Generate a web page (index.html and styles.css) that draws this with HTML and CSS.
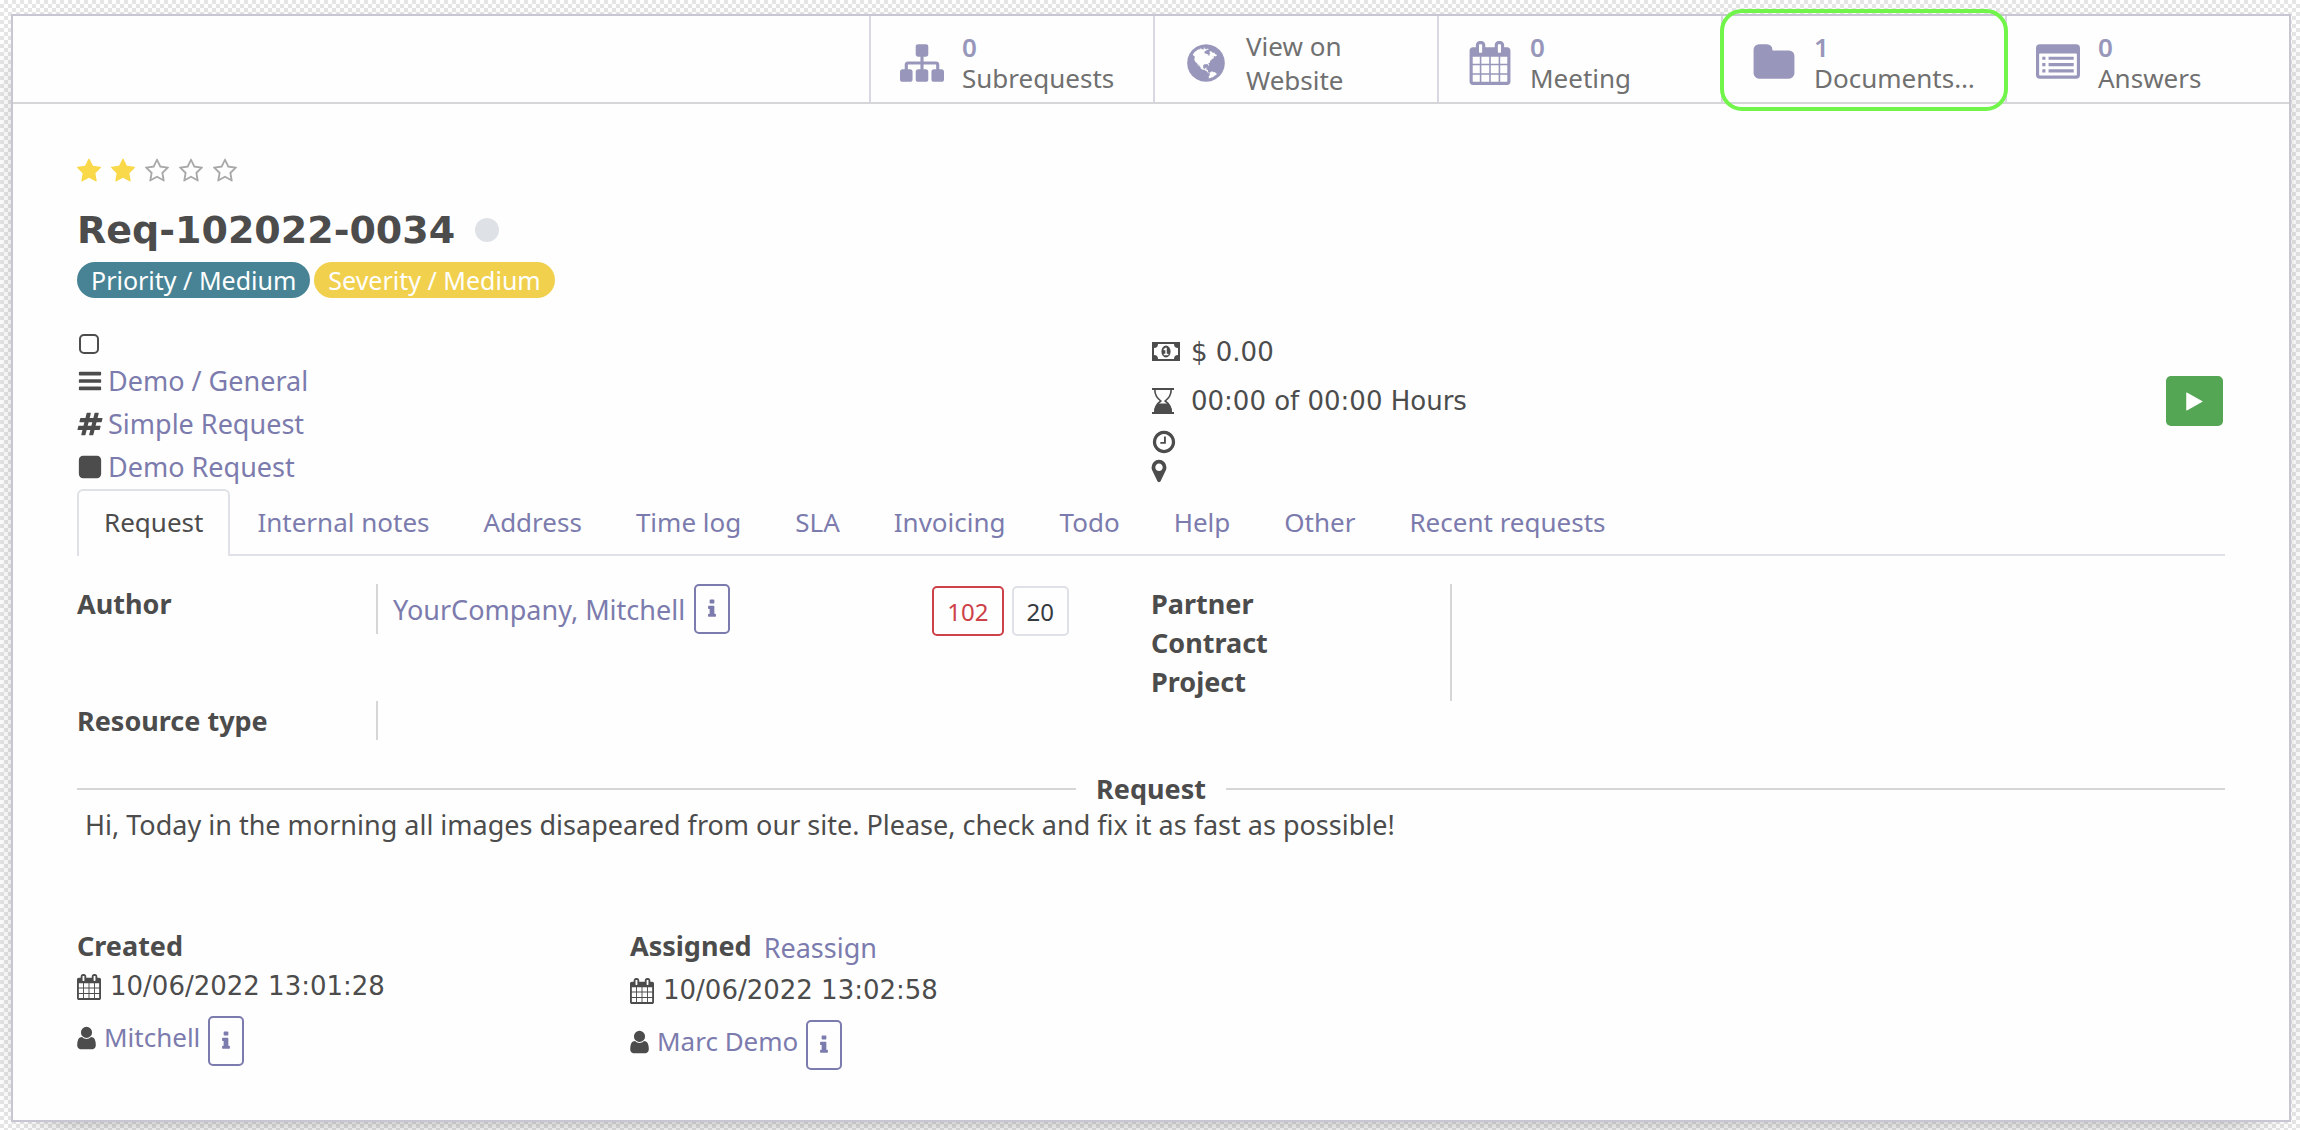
FILE: index.html
```html
<!DOCTYPE html>
<html lang="en">
<head>
  <meta charset="UTF-8" />
  <title>Req-102022-0034</title>
  <link rel="stylesheet" href="styles.css">
</head>
<body>

<!-- icon set -->
<svg class="sprite" aria-hidden="true">
  <symbol id="i-sitemap" viewBox="0 0 1792 1792"><path d="M1792 1248v320q0 40-28 68t-68 28h-320q-40 0-68-28t-28-68v-320q0-40 28-68t68-28h96v-192h-512v192h96q40 0 68 28t28 68v320q0 40-28 68t-68 28h-320q-40 0-68-28t-28-68v-320q0-40 28-68t68-28h96v-192h-512v192h96q40 0 68 28t28 68v320q0 40-28 68t-68 28h-320q-40 0-68-28t-28-68v-320q0-40 28-68t68-28h96v-192q0-52 38-90t90-38h512v-192h-96q-40 0-68-28t-28-68v-320q0-40 28-68t68-28h320q40 0 68 28t28 68v320q0 40-28 68t-68 28h-96v192h512q52 0 90 38t38 90v192h96q40 0 68 28t28 68z"/></symbol>
  <symbol id="i-globe" viewBox="0 0 1792 1792"><path d="M896 128q209 0 385.5 103t279.5 279.5 103 385.5-103 385.5-279.5 279.5-385.5 103-385.5-103-279.5-279.5-103-385.5 103-385.5 279.5-279.5 385.5-103zm274 521q-2 1-9.5 9.5t-13.5 9.5q2 0 4.5-5t5-11 3.5-7q6-7 22-15 14-6 52-12 34-8 51 11-2-2 9.5-13t14.5-12q3-2 15-4.5t15-7.5l2-22q-12 1-17.5-7t-6.5-21q0 2-6 8 0-7-4.5-8t-11.5 1-9 1q-10-3-15-7.5t-8-16.5-4-15q-2-5-9.5-10.5t-9.5-10.5q-1-2-2.5-5.5t-3-6.5-4-5.5-5.5-2.5-7 5-7.5 10-4.5 5q-3-2-6-1.5t-4.5 1-4.5 3-5 3.5q-3 2-8.5 3t-8.5 2q15-5-1-11-10-4-16-3 9-4 7.5-12t-8.5-14h5q-1-4-8.5-8.5t-17.5-8.5-13-6q-8-5-34-9.5t-33-.5q-5 6-4.5 10.5t4 14 3.5 12.5q1 6-5.5 13t-6.5 12q0 7 14 15.5t10 21.5q-3 8-16 16t-16 12q-5 8-1.5 18.5t10.5 16.5q2 2 1.5 4t-3.5 4.5-5.5 4-6.5 3.5l-3 2q-11 5-20.5-6t-13.5-26q-7-25-16-30-23-8-29 1-5-13-41-26-25-9-58-4 6-1 0-15-7-15-19-12 3-6 4-17.5t1-13.5q3-13 12-23 1-1 7-8.5t9.5-13.5.5-6q35 4 50-11 5-5 11.5-17t10.5-17q9-6 14-5.5t14.5 5.5 14.5 5q14 1 15.5-11t-7.5-20q12 1 3-17-4-7-8-9-12-4-27 5-8 4 2 8-1-1-9.5 10.5t-16.5 17.5-16-5q-1-1-5.5-13.5t-9.5-13.5q-8 0-16 15 3-8-11-15t-24-8q19-12-8-27-7-4-20.5-5t-19.5 4q-5 7-5.5 11.5t5 8 10.5 5.5 11.5 4 8.5 3q14 10 8 14-2 1-8.5 3.5t-11.5 4.5-6 4q-3 4 0 14t-2 14q-5-5-9-17.5t-7-16.5q7 9-25 6l-10-1q-4 0-16 2t-20.5 1-13.5-8q-4-8 0-20 1-4 4-2-4-3-11-9.5t-10-8.5q-46 15-94 41 6 1 12-1 5-2 13-6.5t10-5.5q34-14 42-7l5-5q14 16 20 25-7-4-30-1-20 6-22 12 7 12 5 18-4-3-11.5-10t-14.5-11-15-5q-16 0-22 1-146 80-235 222 7 7 12 8 4 1 5 9t2.5 11 11.5-3q9 8 3 19 1-1 44 27 19 17 21 21 3 11-10 18-1-2-9-9t-9-4q-3 5 .5 18.5t10.5 12.5q-7 0-9.5 16t-2.5 35.5-1 23.5l2 1q-3 12 5.5 34.5t21.5 19.5q-13 3 20 43 6 8 8 9 3 2 12 7.5t15 10 10 10.5q4 5 10 22.5t14 23.5q-2 6 9.5 20t10.5 23q-1 0-2.5 1t-2.5 1q3 7 15.5 14t15.5 13q1 3 2 10t3 11 8 2q2-20-24-62-15-25-17-29-3-5-5.5-15.5t-4.5-14.5q2 0 6 1.5t8.5 3.5 7.5 4 2 3q-3 7 2 17.5t12 18.5 17 19 12 13q6 6 14 19.5t0 13.5q9 0 20 10.5t17 19.5q5 8 8 26t5 24q2 7 8.5 13.5t12.5 9.5l16 8 13 7q5 2 18.5 10.5t21.5 11.5q10 4 16 4t14.5-2.5 13.5-3.5q15-2 29 15t21 21q36 19 55 11-2 1 .5 7.5t8 15.5 9 14.5 5.5 8.5q5 6 18 15t18 15q6-4 7-9-3 8 7 20t18 10q14-3 14-32-31 15-49-18 0-1-2.5-5.5t-4-8.5-2.5-8.5 0-7.5 5-3q9 0 10-3.5t-2-12.5-4-13q-1-8-11-20t-12-15q-5 9-16 8t-16-9q0 1-1.5 5.5t-1.5 6.5q-13 0-15-1 1-3 2.5-17.5t3.5-22.5q1-4 5.5-12t7.5-14.5 4-12.5-4.5-9.5-17.5-2.5q-19 1-26 20-1 3-3 10.5t-5 11.5-9 7q-7 3-24 2t-24-5q-13-8-22.5-29t-9.5-37q0-10 2.5-26.5t3-25-5.5-24.5q3-2 9-9.5t10-10.5q2-1 4.5-1.5t4.5 0 4-1.5 3-6q-1-1-4-3-3-3-4-3 7 3 28.5-1.5t27.5 1.5q15 11 22-2 0-1-2.5-9.5t-.5-13.5q5 27 29 9 3 3 15.5 5t17.5 5q3 2 7 5.5t5.5 4.5 5-.5 8.5-6.5q10 14 12 24 11 40 19 44 7 3 11 2t4.5-9.5 0-14-1.5-12.5l-1-8v-18l-1-8q-15-3-18.5-12t1.5-18.5 15-18.5q1-1 8-3.5t15.5-6.5 12.5-8q21-19 15-35 7 0 11-9-1 0-5-3t-7.5-5-4.5-2q9-5 2-16 5-3 7.5-11t7.5-10q9 12 21 2 8-8 1-16 5-7 20.5-10.5t18.5-9.5q7 2 8-2t1-12 3-12q4-5 15-9t13-5l17-11q3-4 0-4 18 2 31-11 10-11-6-20 3-6-3-9.5t-15-5.5q3-1 11.5-.5t10.5-1.5q15-10-7-16-17-5-43 12zm-163 877q206-36 351-189-3-3-12.5-4.5t-12.5-3.5q-18-7-24-8 1-7-2.5-13t-8-9-12.5-8-11-7q-2-2-7-6t-7-5.5-7.5-4.5-8.5-2-10 1l-3 1q-3 1-5.5 2.5t-5.5 3-4 3 0 2.5q-21-17-36-22-5-1-11-5.5t-10.5-7-10-1.5-11.5 7q-5 5-6 15t-2 13q-7-5 0-17.5t2-18.5q-3-6-10.5-4.5t-12 4.5-11.5 8.5-9 6.5-8.5 5.5-8.5 7.5q-3 4-6 12t-5 11q-2-4-11.5-6.5t-9.5-5.5q2 10 4 35t5 38q7 31-12 48-27 25-29 40-4 22 12 26 0 7-8 20.5t-7 21.5q0 6 2 16z"/></symbol>
  <symbol id="i-calendar" viewBox="64 0 1664 1792"><path d="M192 1664h288v-288h-288v288zm352 0h320v-288h-320v288zm-352-352h288v-320h-288v320zm352 0h320v-320h-320v320zm-352-384h288v-288h-288v288zm736 736h320v-288h-320v288zm-384-736h320v-288h-320v288zm768 736h288v-288h-288v288zm-384-352h320v-320h-320v320zm-352-864v-288q0-13-9.5-22.5t-22.5-9.5h-64q-13 0-22.5 9.5t-9.5 22.5v288q0 13 9.5 22.5t22.5 9.5h64q13 0 22.5-9.5t9.5-22.5zm736 864h288v-320h-288v320zm-384-384h320v-288h-320v288zm384 0h288v-288h-288v288zm32-480v-288q0-13-9.5-22.5t-22.5-9.5h-64q-13 0-22.5 9.5t-9.5 22.5v288q0 13 9.5 22.5t22.5 9.5h64q13 0 22.5-9.5t9.5-22.5zm384-64v1280q0 52-38 90t-90 38h-1408q-52 0-90-38t-38-90v-1280q0-52 38-90t90-38h128v-96q0-66 47-113t113-47h64q66 0 113 47t47 113v96h384v-96q0-66 47-113t113-47h64q66 0 113 47t47 113v96h128q52 0 90 38t38 90z"/></symbol>
  <symbol id="i-folder" viewBox="0 0 1792 1792"><path d="M1728 608v704q0 92-66 158t-158 66h-1216q-92 0-158-66t-66-158v-960q0-92 66-158t158-66h320q92 0 158 66t66 158v32h672q92 0 158 66t66 158z"/></symbol>
  <symbol id="i-list" viewBox="0 0 1792 1792">
    <path fill-rule="evenodd" d="M160 128h1472q160 0 160 160v1088q0 160-160 160h-1472q-160 0-160-160v-1088q0-160 160-160zM160 512q-32 0-32 32v832q0 32 32 32h1472q32 0 32-32v-832q0-32-32-32z"/>
    <path d="M256 640h128v128h-128zM256 896h128v128h-128zM256 1152h128v128h-128zM512 640h1024v128h-1024zM512 896h1024v128h-1024zM512 1152h1024v128h-1024z"/>
  </symbol>
  <symbol id="i-star" viewBox="64 0 1664 1792"><path d="M1728 647q0 22-26 48l-363 354 86 500q1 7 1 20 0 21-10.5 35.5t-30.5 14.5q-19 0-40-12l-449-236-449 236q-22 12-40 12-21 0-31.5-14.5t-10.5-35.5q0-6 2-20l86-500-364-354q-25-27-25-48 0-37 56-46l502-73 225-455q19-41 49-41t49 41l225 455 502 73q56 9 56 46z"/></symbol>
  <symbol id="i-star-o" viewBox="64 0 1664 1792"><path d="M1201 1004l306-297-422-62-189-382-189 382-422 62 306 297-73 421 378-199 377 199zm527-357q0 22-26 48l-363 354 86 500q1 7 1 20 0 50-41 50-19 0-40-12l-449-236-449 236q-22 12-40 12-21 0-31.5-14.5t-10.5-35.5q0-6 2-20l86-500-364-354q-25-27-25-48 0-37 56-46l502-73 225-455q19-41 49-41t49 41l225 455 502 73q56 9 56 46z"/></symbol>
  <symbol id="i-bars" viewBox="0 0 1792 1792"><path d="M192 256h1408q64 0 64 64v128q0 64-64 64h-1408q-64 0-64-64v-128q0-64 64-64zM192 768h1408q64 0 64 64v128q0 64-64 64h-1408q-64 0-64-64v-128q0-64 64-64zM192 1280h1408q64 0 64 64v128q0 64-64 64h-1408q-64 0-64-64v-128q0-64 64-64z"/></symbol>
  <symbol id="i-hashtag" viewBox="0 0 1792 1792"><path d="M991 1024l64-256h-254l-64 256h254zm768-504l-56 224q-7 24-31 24h-327l-64 256h311q15 0 25 12 10 14 6 28l-56 224q-5 24-31 24h-327l-81 328q-7 24-31 24h-224q-16 0-26-12-9-12-6-28l78-312h-254l-81 328q-7 24-31 24h-225q-15 0-25-12-9-12-6-28l78-312h-311q-15 0-25-12-9-12-6-28l56-224q7-24 31-24h327l64-256h-311q-15 0-25-12-10-14-6-28l56-224q5-24 31-24h327l81-328q7-24 32-24h224q15 0 25 12 9 12 6 28l-78 312h254l81-328q7-24 32-24h224q15 0 25 12 9 12 6 28l-78 312h311q15 0 25 12 9 12 6 28z"/></symbol>
  <symbol id="i-square" viewBox="0 0 1792 1792"><rect x="128" y="128" width="1536" height="1536" rx="288"/></symbol>
  <symbol id="i-money" viewBox="0 0 30 26">
    <path fill-rule="evenodd" d="M1 3h28v19h-28zM3 9v7q4 0 4 4h16q0-4 4-4v-7q-4 0-4-4h-16q0 4-4 4z"/>
    <path fill-rule="evenodd" d="M15 6.500a4.600 6 0 0 1 0 12a4.600 6 0 0 1 0-12zM15.800 8.800h-1.500l-2 1.800 1 1 1-.8v4h-1.600v1.500h4.700v-1.500h-1.600z"/>
  </symbol>
  <symbol id="i-hourglass" viewBox="0 0 24 28">
    <path d="M1 1h22v2h-22zM1 25h22v2h-22zM3 25q0-6 5-8.500h8q5 2.500 5 8.500z"/>
    <path fill="none" stroke="currentColor" stroke-width="1.600" d="M3.800 2.500c0 6 2.500 8.500 6 11.500c-3.500 2.500-6 5-6 11.500M20.200 2.500c0 6-2.500 8.500-6 11.500c3.500 2.500 6 5 6 11.500"/>
  </symbol>
  <symbol id="i-clock" viewBox="0 0 1792 1792"><path d="M1024 544v448q0 14-9 23t-23 9h-320q-14 0-23-9t-9-23v-64q0-14 9-23t23-9h224v-352q0-14 9-23t23-9h64q14 0 23 9t9 23zm416 352q0-148-73-273t-198-198-273-73-273 73-198 198-73 273 73 273 198 198 273 73 273-73 198-198 73-273zm224 0q0 209-103 385.500t-279.500 279.500-385.500 103-385.500-103-279.500-279.500-103-385.500 103-385.500 279.500-279.500 385.500-103 385.500 103 279.500 279.500 103 385.500z"/></symbol>
  <symbol id="i-marker" viewBox="384 0 1024 1792"><path d="M1152 640q0-106-75-181t-181-75-181 75-75 181 75 181 181 75 181-75 75-181zm256 0q0 109-33 179l-364 774q-16 33-47.500 52t-67.500 19-67.500-19-46.500-52l-365-774q-33-70-33-179 0-212 150-362t362-150 362 150 150 362z"/></symbol>
  <symbol id="i-user" viewBox="256 0 1280 1792"><path d="M1536 1399q0 109-62.500 187t-150.500 78h-854q-88 0-150.500-78t-62.500-187q0-85 8.500-160.500t31.500-152 58.500-131 94-89 134.500-34.500q131 128 313 128t313-128q76 0 134.500 34.500t94 89 58.500 131 31.500 152 8.500 160.500zm-256-887q0 159-112.500 271.500t-271.500 112.500-271.500-112.500-112.500-271.500 112.500-271.500 271.500-112.500 271.500 112.500 112.500 271.500z"/></symbol>
  <symbol id="i-info" viewBox="0 0 1792 1792"><path d="M1216 1344v128q0 26-19 45t-45 19h-512q-26 0-45-19t-19-45v-128q0-26 19-45t45-19h64v-384h-64q-26 0-45-19t-19-45v-128q0-26 19-45t45-19h384q26 0 45 19t19 45v576h64q26 0 45 19t19 45zm-128-1152v192q0 26-19 45t-45 19h-256q-26 0-45-19t-19-45v-192q0-26 19-45t45-19h256q26 0 45 19t19 45z"/></symbol>
  <symbol id="i-play" viewBox="0 0 1792 1792"><path d="M1576 927l-1328 738q-23 13-39.500 3t-16.500-36v-1472q0-26 16.500-36t39.500 3l1328 738q23 13 23 31t-23 31z"/></symbol>
</svg>

<main class="sheet">
  <div class="button-box">
    <button class="stat">
      <svg class="stat-icon"><use href="#i-sitemap"/></svg>
      <span class="stat-info"><span class="stat-value">0</span><span class="stat-text">Subrequests</span></span>
    </button>
    <button class="stat">
      <svg class="stat-icon"><use href="#i-globe"/></svg>
      <span class="stat-info"><span class="stat-text">View on<br>Website</span></span>
    </button>
    <button class="stat">
      <svg class="stat-icon"><use href="#i-calendar"/></svg>
      <span class="stat-info"><span class="stat-value">0</span><span class="stat-text">Meeting</span></span>
    </button>
    <button class="stat highlighted">
      <svg class="stat-icon"><use href="#i-folder"/></svg>
      <span class="stat-info"><span class="stat-value">1</span><span class="stat-text">Documents…</span></span>
    </button>
    <button class="stat">
      <svg class="stat-icon"><use href="#i-list"/></svg>
      <span class="stat-info"><span class="stat-value">0</span><span class="stat-text">Answers</span></span>
    </button>
  </div>

  <div class="content">
    <div class="stars">
      <a href="#" class="on" aria-label="1 star"><svg class="icon icon-narrow"><use href="#i-star"/></svg></a>
      <a href="#" class="on" aria-label="2 stars"><svg class="icon icon-narrow"><use href="#i-star"/></svg></a>
      <a href="#" aria-label="3 stars"><svg class="icon icon-narrow"><use href="#i-star-o"/></svg></a>
      <a href="#" aria-label="4 stars"><svg class="icon icon-narrow"><use href="#i-star-o"/></svg></a>
      <a href="#" aria-label="5 stars"><svg class="icon icon-narrow"><use href="#i-star-o"/></svg></a>
    </div>

    <div class="title">
      <h1>Req-102022-0034</h1>
      <button class="state-dot" aria-label="Kanban state"></button>
    </div>

    <div class="tags">
      <span class="tag tag-priority">Priority / Medium</span>
      <span class="tag tag-severity">Severity / Medium</span>
    </div>

    <div class="meta">
      <div class="meta-left">
        <div class="meta-check"><input type="checkbox" aria-label="Channel"></div>
        <div class="meta-row"><svg class="icon"><use href="#i-bars"/></svg><a href="#">Demo / General</a></div>
        <div class="meta-row"><svg class="icon"><use href="#i-hashtag"/></svg><a href="#">Simple Request</a></div>
        <div class="meta-row"><svg class="icon"><use href="#i-square"/></svg><a href="#">Demo Request</a></div>
      </div>
      <div class="meta-right">
        <div class="info-row"><svg class="icon icon-wide"><use href="#i-money"/></svg><span class="numeric">$ 0.00</span></div>
        <div class="info-row">
          <svg class="icon icon-hourglass"><use href="#i-hourglass"/></svg><span class="numeric">00:00 of 00:00 Hours</span>
          <button class="play" aria-label="Start work"><svg class="play-icon"><use href="#i-play"/></svg></button>
        </div>
        <div class="icon-row"><svg class="icon"><use href="#i-clock"/></svg></div>
        <div class="icon-row"><svg class="icon icon-marker"><use href="#i-marker"/></svg></div>
      </div>
    </div>

    <nav class="tabs">
      <a href="#" class="active">Request</a>
      <a href="#">Internal notes</a>
      <a href="#">Address</a>
      <a href="#">Time log</a>
      <a href="#">SLA</a>
      <a href="#">Invoicing</a>
      <a href="#">Todo</a>
      <a href="#">Help</a>
      <a href="#">Other</a>
      <a href="#">Recent requests</a>
    </nav>

    <div class="groups">
      <div class="field">
        <div class="label">Author</div>
        <div class="value">
          <a href="#">YourCompany, Mitchell</a>
          <button class="btn-info" aria-label="Author info"><svg class="info-icon"><use href="#i-info"/></svg></button>
        </div>
        <div class="counters">
          <button class="counter danger">102</button>
          <button class="counter">20</button>
        </div>
      </div>
      <div class="field">
        <div class="label">Partner<br>Contract<br>Project</div>
        <div class="value"></div>
      </div>
      <div class="field">
        <div class="label">Resource type</div>
        <div class="value"></div>
      </div>
    </div>

    <h2 class="separator">Request</h2>
    <p class="message">Hi, Today in the morning all images disapeared from our site. Please, check and fix it as fast as possible!</p>

    <div class="history">
      <div>
        <div class="history-head"><strong>Created</strong></div>
        <div class="history-date"><svg class="icon icon-narrow"><use href="#i-calendar"/></svg><span class="numeric">10/06/2022 13:01:28</span></div>
        <div class="history-user">
          <svg class="icon icon-user"><use href="#i-user"/></svg><a href="#">Mitchell</a>
          <button class="btn-info" aria-label="Creator info"><svg class="info-icon"><use href="#i-info"/></svg></button>
        </div>
      </div>
      <div>
        <div class="history-head"><strong>Assigned</strong><a href="#">Reassign</a></div>
        <div class="history-date"><svg class="icon icon-narrow"><use href="#i-calendar"/></svg><span class="numeric">10/06/2022 13:02:58</span></div>
        <div class="history-user">
          <svg class="icon icon-user"><use href="#i-user"/></svg><a href="#">Marc Demo</a>
          <button class="btn-info" aria-label="Assignee info"><svg class="info-icon"><use href="#i-info"/></svg></button>
        </div>
      </div>
    </div>
  </div>
</main>

</body>
</html>
```
FILE: styles.css
```css
* { box-sizing: border-box; }
body {
  margin: 0;
  padding: 14px 9px 9px 11px;
  font-family: "Noto Sans", "Open Sans", sans-serif;
  font-size: 27px;
  line-height: 39px;
  color: #4c4c4c;
  background: repeating-conic-gradient(#e6e6e6 0 25%, #fff 0 50%) 0 0 / 8px 8px;
}
a { color: #7c7bad; text-decoration: none; }
button { font: inherit; background: none; border: 0; padding: 0; cursor: pointer; }
svg { display: block; fill: currentColor; flex: none; }
.sprite { position: absolute; width: 0; height: 0; }

.icon { width: 26px; height: 26px; }
.icon-narrow { width: 24px; }
.icon-wide { width: 30px; }
.icon-hourglass { width: 24px; height: 28px; margin-right: 6px; }
.icon-marker { width: 16px; }
.icon-user { width: 19px; }

.numeric { font-family: "DejaVu Sans", sans-serif; font-size: 26px; }

.sheet {
  background: #fefefe;
  border: 2px solid #c8c6d2;
  box-shadow: 0 10px 40px -30px #000;
}

/* stat buttons */
.button-box {
  display: flex;
  justify-content: flex-end;
  border-bottom: 2px solid #d6d6d8;
}
.stat {
  position: relative;
  display: flex;
  align-items: center;
  gap: 18px;
  width: 284px;
  height: 86px;
  padding: 8px 0 0 29px;
  border-left: 2px solid #d9d7e3;
  color: #9897bb;
  font-size: 26px;
  text-align: left;
}
.stat-icon { width: 44px; height: 44px; }
.stat-info { display: flex; flex-direction: column; }
.stat-value { font-weight: 600; line-height: 31px; }
.stat-text { color: #707070; line-height: 31px; }
.stat-text:only-child { line-height: 34px; }
.highlighted::after {
  content: "";
  position: absolute;
  inset: -7px -3px -9px -3px;
  border: 4px solid #72f54a;
  border-radius: 22px;
  z-index: 1;
}

.content { padding: 54px 64px 50px; }

.stars { display: flex; gap: 10px; margin-bottom: 22px; }
.stars a { color: #a8a8a8; }
.stars a.on { color: #f9d84a; }

.title { display: flex; align-items: center; gap: 20px; }
h1 {
  margin: 0;
  font-family: "DejaVu Sans", sans-serif;
  font-size: 38px;
  line-height: 48px;
}
.state-dot { width: 24px; height: 24px; border-radius: 50%; background: #dee2e6; }

.tags { display: flex; gap: 4px; margin-top: 8px; }
.tag {
  padding: 0 14px;
  border-radius: 18px;
  color: #fff;
  font-size: 25px;
  line-height: 36px;
}
.tag-priority { background: #478395; }
.tag-severity { background: #f1d04d; }

/* request meta */
.meta { display: grid; grid-template-columns: 1fr 1fr; margin-top: 27px; }
.meta-check { height: 34px; padding: 9px 2px; }
.meta-check input {
  appearance: none;
  display: block;
  width: 20px;
  height: 20px;
  margin: 0;
  border: 2px solid #4c4c4c;
  border-radius: 5px;
}
.meta-row { display: flex; align-items: center; gap: 5px; line-height: 43px; }
.meta-right { padding-top: 3px; }
.info-row { display: flex; align-items: center; gap: 10px; height: 48px; }
.info-row + .info-row { height: 50px; }
.icon-row { height: 29px; padding-top: 3px; }
.play {
  display: grid;
  place-items: center;
  width: 57px;
  height: 50px;
  margin-left: auto;
  margin-right: 2px;
  border-radius: 5px;
  background: #54a554;
  color: #fff;
}
.play-icon { width: 21px; height: 21px; }

.tabs {
  display: flex;
  margin-top: 1px;
  border-bottom: 2px solid #dee2e6;
  font-size: 26px;
}
.tabs a {
  padding: 12px 25px 14px;
  margin-bottom: -2px;
  border: 2px solid transparent;
  border-bottom: 0;
}
.tabs a.active {
  color: #4c4c4c;
  background: #fefefe;
  border-color: #dee2e6;
  border-radius: 6px 6px 0 0;
}

.groups { display: grid; grid-template-columns: 1fr 1fr; padding-top: 28px; }
.field { display: flex; align-items: flex-start; }
.label { width: 299px; font-weight: bold; }
.value {
  display: flex;
  align-items: center;
  gap: 9px;
  align-self: stretch;
  padding-left: 15px;
  border-left: 2px solid #d6d6d6;
}
.field:first-child .value { align-self: flex-start; }
.btn-info {
  display: grid;
  place-items: center;
  width: 36px;
  height: 50px;
  border: 2px solid #7c7bad;
  border-radius: 5px;
  color: #7c7bad;
}
.info-icon { width: 22px; height: 22px; }
.counters { display: flex; gap: 8px; margin-left: auto; padding: 2px 82px 0 0; }
.counter {
  height: 50px;
  padding: 0 13px;
  border: 2px solid #dee2e6;
  border-radius: 5px;
  color: #343a40;
  font-size: 24px;
}
.counter.danger { border-color: #cd4148; color: #cd4148; }

.separator {
  display: flex;
  align-items: center;
  gap: 20px;
  margin: 32px 0 2px;
  font-size: 27px;
  line-height: 34px;
}
.separator::before, .separator::after {
  content: "";
  flex: 1;
  height: 2px;
  background: #d6d6d6;
}
.message { margin: 0; padding-left: 8px; line-height: 34px; }

.history { display: grid; grid-template-columns: 553px 1fr; margin-top: 84px; }
.history-head { display: flex; gap: 12px; margin-bottom: 2px; }
.history-head a { line-height: 43px; }
.history-date { display: flex; align-items: center; gap: 9px; }
.history-user {
  display: flex;
  gap: 8px;
  margin-top: 10px;
  font-size: 26px;
  line-height: 42px;
}
.history-user .icon { margin-top: 9px; }
```
